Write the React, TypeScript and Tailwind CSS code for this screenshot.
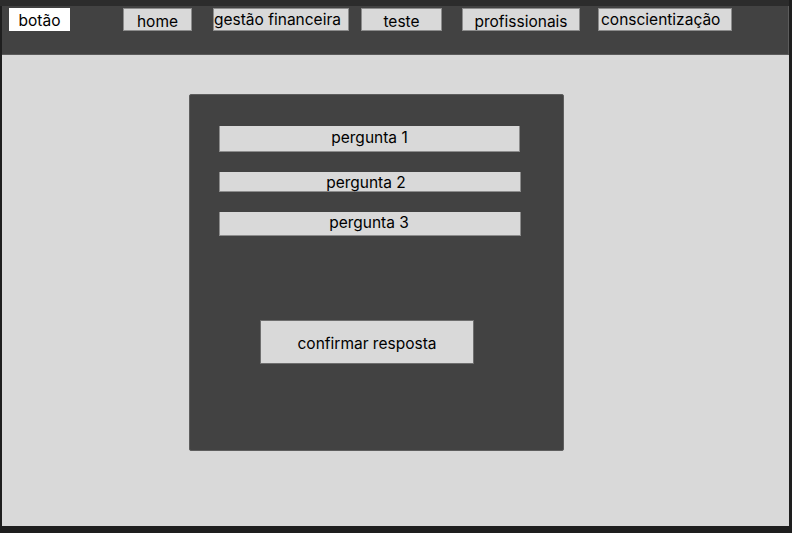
import React from 'react';

// nav items: label, box width, left gap from previous item, text alignment tweaks
const navItems = [
  { label: 'home', width: 'w-[69px]', gap: 'ml-[53px]', text: 'pt-[5px] justify-center' },
  { label: 'gestão financeira', width: 'w-[136px]', gap: 'ml-[21px]', text: 'pt-[1px] justify-start' },
  { label: 'teste', width: 'w-[81px]', gap: 'ml-[12px]', text: 'pt-[5px] justify-center' },
  { label: 'profissionais', width: 'w-[118px]', gap: 'ml-[20px]', text: 'pt-[5px] justify-center' },
  { label: 'conscientização', width: 'w-[134px]', gap: 'ml-[18px]', text: 'pt-[1px] justify-start pl-[2px]' },
];

const questions = [
  { label: 'pergunta 1', box: 'mt-[31px] w-[301px] h-[26px]', text: 'pb-[1px]' },
  { label: 'pergunta 2', box: 'mt-[20px] w-[302px] h-[20px]', text: 'pt-[3px] -ml-[8px]' },
  { label: 'pergunta 3', box: 'mt-[20px] w-[302px] h-[24px]', text: 'pb-[1px] -ml-[2px]' },
];

const App: React.FC = () => {
  return (
    <div
      className="w-[792px] h-[533px] bg-[#1e1e1e] overflow-hidden text-black"
      style={{ fontFamily: 'Inter, "Noto Sans", sans-serif' }}
    >
      <div className="h-[6px] w-[789px] bg-[#2c2c2c]" />
      <div className="ml-[2px] w-[787px] h-[520px] bg-[#d9d9d9] flex flex-col">
        {/* top navigation */}
        <header className="h-[49px] bg-[#424242] border-b border-r border-[#5c5c5c] flex items-start pt-[2px] pl-[7px] shrink-0">
          <button className="w-[61px] h-[23px] bg-white text-[15.5px] leading-none flex items-center justify-center pt-[3px]">
            botão
          </button>
          {navItems.map((item) => (
            <button
              key={item.label}
              className={`${item.width} ${item.gap} h-[23px] bg-[#d9d9d9] border border-[#8c8c8c] text-[15.5px] leading-none flex items-center whitespace-nowrap ${item.text}`}
            >
              {item.label}
            </button>
          ))}
        </header>

        {/* quiz card */}
        <main className="flex-1">
          <div className="mt-[39px] ml-[187px] w-[375px] h-[357px] bg-[#424242] border border-[#5e5e5e] rounded-[2px] flex flex-col items-start pl-[29px]">
            {questions.map((q) => (
              <div
                key={q.label}
                className={`${q.box} bg-[#d9d9d9] border-l border-b border-r border-[#8c8c8c] flex items-center justify-center text-[15.5px] leading-none`}
              >
                <span className={q.text}>{q.label}</span>
              </div>
            ))}
            <button className="mt-[84px] ml-[41px] w-[214px] h-[44px] bg-[#d9d9d9] border border-[#6e6e6e] flex items-center justify-center pt-[3px] text-[15.5px] leading-none">
              confirmar resposta
            </button>
          </div>
        </main>
      </div>
    </div>
  );
};

export default App;
